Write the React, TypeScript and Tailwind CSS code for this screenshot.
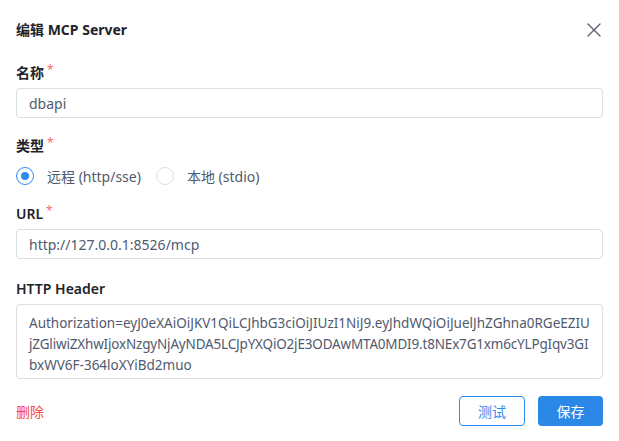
import React from "react";

const font = { fontFamily: '"Noto Sans", "Noto Sans CJK SC", sans-serif' };

function Label({ text, required }: { text: string; required?: boolean }) {
  return (
    <div className="flex items-center h-5 text-[14px] font-semibold text-[#1f2329] leading-5">
      <span>{text}</span>
      {required && <span className="ml-[3px] text-[#f56c6c] text-[12px] font-normal relative -top-[3px]">*</span>}
    </div>
  );
}

function Radio({ checked, label }: { checked?: boolean; label: string }) {
  return (
    <div className="flex items-center">
      <span
        className={
          "w-[18px] h-[18px] rounded-full border flex items-center justify-center " +
          (checked ? "border-[#2d8cf0]" : "border-[#dcdee2]")
        }
      >
        {checked && <span className="w-[8px] h-[8px] rounded-full bg-[#2d8cf0]" />}
      </span>
      <span className="ml-[13px] text-[14px] text-[#515a6e]">{label}</span>
    </div>
  );
}

export default function App() {
  return (
    <div style={font} className="w-[619px] h-[441px] bg-white flex flex-col px-4 pt-5 text-[#515a6e]">
      <div className="flex items-center justify-between h-5">
        <div className="text-[14px] font-bold text-[#1f2329] leading-5">编辑 MCP Server</div>
        <svg width="14" height="14" viewBox="0 0 14 14" className="mr-[2px]">
          <path d="M1 1 L13 13 M13 1 L1 13" stroke="#5c6370" strokeWidth="1.4" strokeLinecap="round" />
        </svg>
      </div>

      <div className="mt-[23px]">
        <Label text="名称" required />
      </div>
      <div className="mt-[5px] h-[30px] border border-[#dcdee2] rounded-[4px] flex items-center px-3 text-[14px] text-[#515a6e]">
        dbapi
      </div>

      <div className="mt-[18px]">
        <Label text="类型" required />
      </div>
      <div className="mt-[10px] h-5 flex items-center gap-[15px]">
        <Radio checked label="远程 (http/sse)" />
        <Radio label="本地 (stdio)" />
      </div>

      <div className="mt-[18px]">
        <Label text="URL" required />
      </div>
      <div className="mt-[5px] h-[30px] border border-[#dcdee2] rounded-[4px] flex items-center px-3 text-[14px] text-[#515a6e]">
        http://127.0.0.1:8526/mcp
      </div>

      <div className="mt-[20px]">
        <Label text="HTTP Header" />
      </div>
      <div className="mt-[5px] h-[75px] border border-[#dcdee2] rounded-[4px] px-3 pt-[8px] text-[13.5px] leading-[21px] text-[#515a6e] whitespace-nowrap overflow-hidden">
        <div>Authorization=eyJ0eXAiOiJKV1QiLCJhbG3ciOiJIUzI1NiJ9.eyJhdWQiOiJuelJhZGhna0RGeEZIU</div>
        <div className="tracking-[-0.18px]">jZGliwiZXhwIjoxNzgyNjAyNDA5LCJpYXQiO2jE3ODAwMTA0MDI9.t8NEx7G1xm6cYLPgIqv3GI</div>
        <div>bxWV6F-364loXYiBd2muo</div>
      </div>

      <div className="mt-[17px] flex items-center justify-between">
        <span className="text-[14px] text-[#f4464a]">删除</span>
        <div className="flex gap-[13px]">
          <button className="w-[66px] h-[30px] rounded-[4px] border border-[#2d8cf0] text-[#2d8cf0] text-[14px] bg-white">测试</button>
          <button className="w-[65px] h-[30px] rounded-[4px] bg-[#2b88e6] text-white text-[14px]">保存</button>
        </div>
      </div>
    </div>
  );
}
